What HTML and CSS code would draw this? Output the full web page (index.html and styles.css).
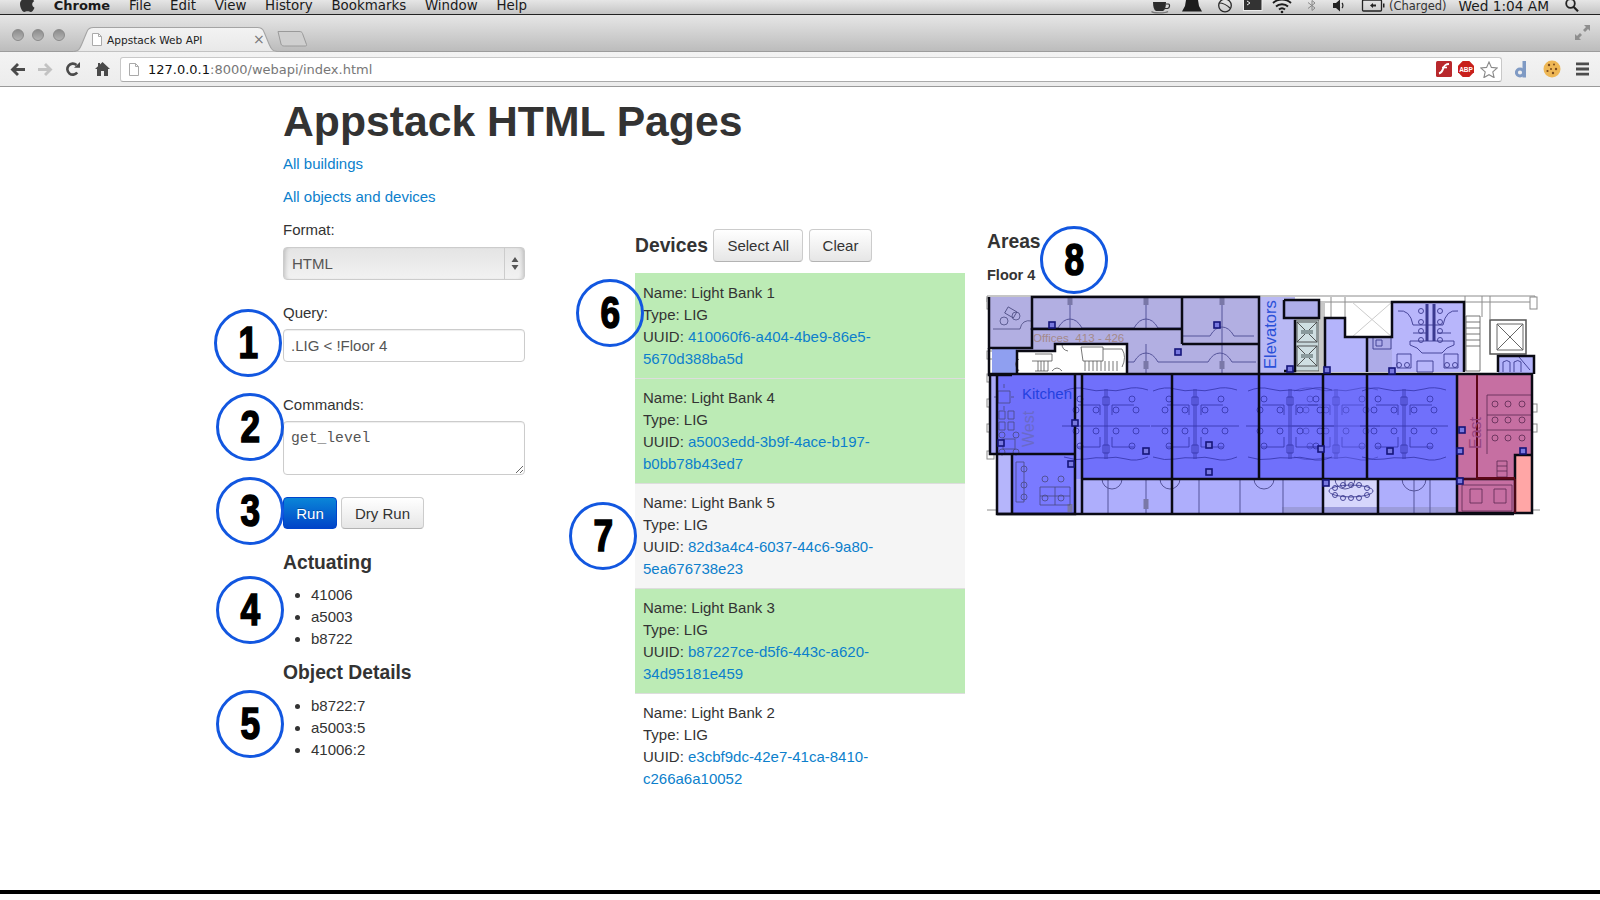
FILE: index.html
```html
<!DOCTYPE html>
<html>
<head>
    <meta charset="utf-8">
    <title>Appstack Web API</title>
    <link rel="stylesheet" href="styles.css">
</head>
<body>
<div class="menubar">
    <svg class="apple" viewBox="0 0 15 13"><path d="M10.5 0c-1.500 0-2.100.9-3 .9S5.800 0 4.500 0C2 0 0 2 0 5c0 3.500 2.300 8 4.300 8 1.100 0 1.700-.7 3.200-.7s2 .7 3.200.7c1.500 0 3-2.200 3.800-4.300-1.500-.7-2.300-1.900-2.300-3.400 0-1.300.8-2.400 2-3.100C13.400.7 12 0 10.500 0z"/></svg>
    <span class="menu-item app-name">Chrome</span>
    <span class="menu-item">File</span>
    <span class="menu-item">Edit</span>
    <span class="menu-item">View</span>
    <span class="menu-item">History</span>
    <span class="menu-item">Bookmarks</span>
    <span class="menu-item">Window</span>
    <span class="menu-item">Help</span>
    <div class="tray">
        <svg class="tray-icons" viewBox="1150 0 238 15">
            <path d="M1154 2h13c0 5-1 8-3 9h-7c-2-1-3-4-3-9z" fill="#2c2c2c"/>
            <path d="M1167 4h2.500c1.500 0 1.500 4-1 4.500h-2.500" fill="none" stroke="#2c2c2c" stroke-width="1.200"/>
            <path d="M1152.500 11.500c2 1.800 14 1.800 16.500 0" fill="none" stroke="#777" stroke-width="1.400"/>
            <path d="M1187 0h12l1 6 3 5.500h-20l3-5.500z" fill="#1c1c1c"/>
            <circle cx="1226" cy="5.500" r="6.300" fill="none" stroke="#2a2a2a" stroke-width="1.300"/>
            <path d="M1220 3c3 0 8 2 11.500 5.500" fill="none" stroke="#2a2a2a" stroke-width="1.200"/>
            <rect x="1244.500" y="-2" width="18.500" height="12.500" fill="#333" stroke="#eee" stroke-width="1"/>
            <path d="M1248 1l3 2-3 2" fill="none" stroke="#eee" stroke-width="1"/>
            <path d="M1274 3c5-4.500 13-4.500 18 0M1277 6.500c3-3 9-3 12 0M1280 9.500c1.800-1.600 4.200-1.600 6 0" fill="none" stroke="#1c1c1c" stroke-width="1.900"/>
            <circle cx="1283" cy="12" r="1.300" fill="#1c1c1c"/>
            <path d="M1309 2.500l7 5.500-3 2.500V.500l3 2.500-7 5.500" fill="none" stroke="#888" stroke-width="1"/>
            <path d="M1334 3h3l4-3.500v12l-4-3.500h-3z" fill="#222"/>
            <path d="M1343 3c1.200 1.200 1.200 3.800 0 5" fill="none" stroke="#222" stroke-width="1.200"/>
            <rect x="1363.500" y="0" width="19" height="11" rx="1" fill="none" stroke="#222" stroke-width="1.300"/>
            <rect x="1384" y="3.500" width="1.500" height="4" fill="#222"/>
            <path d="M1368 5.500h3l3-2.500v1.500h3v2h-3V8l-3-2.500z" fill="#222"/>
        </svg>
        <span class="tray-text charged">(Charged)</span>
        <span class="tray-text clock">Wed 1:04 AM</span>
        <svg class="magnifier" viewBox="0 0 14 12"><circle cx="5.500" cy="3.500" r="4.300" fill="none" stroke="#222" stroke-width="1.800"/><path d="M8.500 6.800l4.500 4.500" stroke="#222" stroke-width="2.200"/></svg>
    </div>
</div>

<div class="tabstrip">
    <div class="lights"><i></i><i></i><i></i></div>
    <div class="tab">
        <svg class="tab-shape" viewBox="0 0 192 25" preserveAspectRatio="none">
            <path d="M0 24.500c5 0 6-2 8-7l5-13c1-3 2.500-4 6-4h152c3.500 0 5 1 6 4l5 13c2 5 3 7 10 7" fill="url(#tabfill)" stroke="#a4a4a4"/>
            <defs><linearGradient id="tabfill" x1="0" y1="0" x2="0" y2="1"><stop offset="0" stop-color="#f3f3f3"/><stop offset="1" stop-color="#e8e8e8"/></linearGradient></defs>
        </svg>
        <svg class="doc tab-doc" viewBox="0 0 10 13"><path d="M.5.500h6l3 3v9h-9z" fill="#fff" stroke="#aaa"/><path d="M6.500.500v3h3" fill="none" stroke="#aaa"/></svg>
        <span class="tab-title">Appstack Web API</span>
        <span class="tab-close">×</span>
    </div>
    <svg class="new-tab" viewBox="0 0 30 17"><path d="M.5 1.500h21c2 0 3 .5 3.500 2l4 11c.4 1.200-.3 1.500-1.500 1.500H7c-2 0-3-.5-3.500-2z" fill="#cfcfcf" stroke="#9a9a9a"/></svg>
    <svg class="expand" viewBox="0 0 15 15"><path d="M9 0h6v6l-2-2-3 3-2-2 3-3zM6 15H0V9l2 2 3-3 2 2-3 3z" fill="#8e8e8e"/></svg>
</div>

<div class="toolbar">
    <svg class="nav-icon back" viewBox="0 0 15 13"><path d="M7 0l2 2-3 3h9v3H6l3 3-2 2-6.500-6.500z" fill="#4a4a4a"/></svg>
    <svg class="nav-icon forward" viewBox="0 0 15 13"><path d="M8 0L6 2l3 3H0v3h9l-3 3 2 2 6.500-6.500z" fill="#c2c2c2"/></svg>
    <svg class="nav-icon reload" viewBox="0 0 14 14"><path d="M11.200 10.500A5.500 5.500 0 1 1 10.500 3" fill="none" stroke="#4a4a4a" stroke-width="2.600"/><path d="M8 5.800h6V0z" fill="#4a4a4a"/></svg>
    <svg class="nav-icon home" viewBox="0 0 15 14"><path d="M7.500 0L15 7h-2v7H9V9H6v5H2V7H0l3-2.800V1h2v1.400z" fill="#4a4a4a"/></svg>
    <div class="omnibox">
        <svg class="doc" viewBox="0 0 10 13"><path d="M.5.500h6l3 3v9h-9z" fill="#fff" stroke="#aaa"/><path d="M6.500.500v3h3" fill="none" stroke="#aaa"/></svg>
        <span class="url"><b>127.0.0.1</b>:8000/webapi/index.html</span>
        <svg class="ext flash" viewBox="0 0 16 16"><rect width="16" height="16" rx="1.500" fill="#b8282c"/><path d="M13 3c-4 0-5 2-6 5s-2 4-4 4.500" fill="none" stroke="#fff" stroke-width="2"/><path d="M6 6.500h5" stroke="#fff" stroke-width="1.600"/></svg>
        <svg class="ext abp" viewBox="0 0 16 16"><path d="M4.700 0h6.600L16 4.700v6.600L11.300 16H4.700L0 11.300V4.700z" fill="#c8201c"/><text x="8" y="10.800" class="abp-text">ABP</text></svg>
        <svg class="ext star" viewBox="0 0 18 17"><path d="M9 1l2.400 5.400 5.800.6-4.400 3.900 1.300 5.700L9 13.700l-5.100 2.900 1.300-5.700L.8 7l5.800-.6z" fill="#fff" stroke="#8a8a8a" stroke-width="1.100"/></svg>
    </div>
    <svg class="tool-icon dee" viewBox="0 0 12 17"><circle cx="5" cy="11.500" r="3.600" fill="none" stroke="#7f9ac4" stroke-width="3"/><path d="M7.500 0h3.500v16.500H7.500z" fill="#7f9ac4"/></svg>
    <svg class="tool-icon cookie" viewBox="0 0 18 18"><circle cx="9" cy="9" r="8.500" fill="#eeb755"/><g fill="#7a4a1c"><circle cx="6" cy="5" r="1.200"/><circle cx="11" cy="4.500" r="1"/><circle cx="13" cy="9" r="1.200"/><circle cx="8" cy="9" r="1"/><circle cx="4.500" cy="11" r="1.100"/><circle cx="10" cy="13" r="1.200"/></g></svg>
    <svg class="tool-icon burger" viewBox="0 0 14 14"><path d="M0 0h14v3H0zM0 5.500h14v3H0zM0 11h14v3H0z" fill="#4c4c4c"/></svg>
</div>

<div class="page">
    <div class="heading">
        <h1>Appstack HTML Pages</h1>
        <p><a href="#">All buildings</a></p>
        <p><a href="#">All objects and devices</a></p>
    </div>
    <div class="columns">
        <form class="col-query">
            <label>Format:</label>
            <div class="select-wrap">
                <select><option>HTML</option></select>
                <span class="select-arrows"><svg viewBox="0 0 8 13"><path d="M4 0l3.500 5h-7zM4 13L.5 8h7z" fill="#555"/></svg></span>
            </div>
            <label>Query:</label>
            <input type="text" value=".LIG &lt; !Floor 4">
            <label>Commands:</label>
            <textarea>get_level</textarea>
            <div class="run-row">
                <button type="button" class="btn btn-primary">Run</button>
                <button type="button" class="btn">Dry Run</button>
            </div>
            <h4>Actuating</h4>
            <ul>
                <li>41006</li>
                <li>a5003</li>
                <li>b8722</li>
            </ul>
            <h4>Object Details</h4>
            <ul>
                <li>b8722:7</li>
                <li>a5003:5</li>
                <li>41006:2</li>
            </ul>
        </form>

        <div class="col-devices">
            <div class="devices-head">
                <h4>Devices</h4>
                <button type="button" class="btn">Select All</button>
                <button type="button" class="btn">Clear</button>
            </div>
            <div class="device on">Name: Light Bank 1<br>Type: LIG<br>UUID: <a href="#">410060f6-a404-4be9-86e5-</a><br><a href="#">5670d388ba5d</a></div>
            <div class="device on">Name: Light Bank 4<br>Type: LIG<br>UUID: <a href="#">a5003edd-3b9f-4ace-b197-</a><br><a href="#">b0bb78b43ed7</a></div>
            <div class="device hover">Name: Light Bank 5<br>Type: LIG<br>UUID: <a href="#">82d3a4c4-6037-44c6-9a80-</a><br><a href="#">5ea676738e23</a></div>
            <div class="device on">Name: Light Bank 3<br>Type: LIG<br>UUID: <a href="#">b87227ce-d5f6-443c-a620-</a><br><a href="#">34d95181e459</a></div>
            <div class="device">Name: Light Bank 2<br>Type: LIG<br>UUID: <a href="#">e3cbf9dc-42e7-41ca-8410-</a><br><a href="#">c266a6a10052</a></div>
        </div>

        <div class="col-areas">
            <h4>Areas</h4>
            <h5>Floor 4</h5>
            <svg class="plan" viewBox="985 292 555 228">
                <defs>
                    <g id="bay" fill="none" stroke="#3434a8" stroke-width=".8">
                        <path d="M-42-36q12-5 22-2t20 1q10 2 20-1t22 1M-42 30q12 4 22 2t20-1q10-2 20 1t22-2"/>
                        <path d="M-44-1H44M-1-38V32M1-38V32M-28-22h22v10M28-22H6v10M-28 20h22V10M28 20H6V10"/>
                        <path d="M-3-30h6v8h-6zM-3 18h6v8h-6z"/>
                        <circle cx="-10" cy="-17" r="3"/><circle cx="10" cy="-17" r="3"/><circle cx="-10" cy="4" r="3"/><circle cx="10" cy="4" r="3"/>
                        <circle cx="-30" cy="-17" r="3"/><circle cx="30" cy="-17" r="3"/><circle cx="-30" cy="4" r="3"/><circle cx="30" cy="4" r="3"/>
                        <circle cx="-26" cy="19" r="3"/><circle cx="26" cy="19" r="3"/><circle cx="-26" cy="-28" r="3"/><circle cx="26" cy="-28" r="3"/>
                    </g>
                    <g id="lift" fill="none" stroke="#444" stroke-width=".9">
                        <rect x="-10" y="-10" width="20" height="20" fill="#cfdfe2"/>
                        <path d="M-10-10L10 10M10-10L-10 10"/>
                        <rect x="-6" y="-2" width="12" height="4" fill="#8a9a9c" stroke="none"/>
                    </g>
                    <g id="sq"><rect x="-3" y="-3" width="6" height="6" fill="#7878e0" stroke="#15157a" stroke-width="1.600"/></g>
                </defs>

                <!-- shell and windows -->
                <g fill="#fff" stroke="#8c8c8c" stroke-width="1">
                    <path d="M987 297H1535V303H987z" fill="none"/>
                    <rect x="987" y="299" width="5" height="11"/><rect x="987" y="352" width="6" height="8"/><rect x="987" y="375" width="6" height="8"/>
                    <rect x="987" y="400" width="7" height="8"/><rect x="987" y="425" width="7" height="8"/><rect x="987" y="452" width="7" height="8"/>
                    <rect x="1530" y="298" width="7" height="12"/><rect x="1532" y="405" width="5" height="8"/><rect x="1532" y="425" width="5" height="8"/>
                    <path d="M987 511H1012M1532 511H1540" fill="none"/>
                    <path d="M1331 298V320M1345 298V320M1465 297V372M1482 297V318M1490 297V320" fill="none"/>
                </g>
                <path d="M1466 317h14v55h-14zM1466 323h14M1466 329h14M1466 335h14M1466 341h14M1466 347h14" fill="#fff" stroke="#666" stroke-width=".9"/>

                <!-- north wing -->
                <path d="M990 298H1259V376H1127V345H1055V352H1017V349H990z" fill="#b2afe2"/>
                <rect x="992" y="349" width="25" height="27" fill="#8f9ff0"/>
                <rect x="1259" y="298" width="36" height="78" fill="#b9b9f4"/>
                <rect x="1284" y="301" width="35" height="18" fill="#aeaeea"/>
                <rect x="1295" y="321" width="24" height="51" fill="#c7d7da" stroke="#555"/>
                <use href="#lift" x="1307" y="333"/><use href="#lift" x="1307" y="357"/>
                <rect x="1319" y="303" width="6" height="70" fill="#c8c8c8"/>
                <path d="M1325 319h20v19h47v35h-67z" fill="#b4b4fb"/>
                <rect x="1367" y="338" width="25" height="35" fill="#adabe8"/>
                <rect x="1392" y="303" width="72" height="70" fill="#b8b6fb"/>
                <rect x="1498" y="357" width="36" height="17" fill="#b4b4fb"/>

                <!-- lift on the east side -->
                <rect x="1490" y="321" width="36" height="34" fill="#fff" stroke="#555" stroke-width="1.500"/>
                <path d="M1497 325h26v26h-26zM1497 325l26 26M1523 325l-26 26" fill="none" stroke="#666"/>
                <path d="M1352 303l40 35M1392 303l-40 35" stroke="#ccc"/>

                <!-- open office -->
                <rect x="997" y="376" width="78" height="79" fill="#7070fb"/>
                <rect x="990" y="376" width="7" height="79" fill="#aaaaf8"/>
                <rect x="1075" y="376" width="7" height="104" fill="#9090ff"/>
                <rect x="1082" y="376" width="375" height="104" fill="#7070fb"/>
                <rect x="1457" y="376" width="75" height="104" fill="#c66fa2"/>
                <rect x="1458" y="480" width="57" height="34" fill="#c66fa2"/>
                <rect x="1515" y="456" width="17" height="58" fill="#ffa6a6"/>

                <!-- south wing -->
                <rect x="997" y="455" width="15" height="60" fill="#b5b5fb"/>
                <rect x="1012" y="455" width="63" height="60" fill="#7a7aff"/>
                <rect x="1075" y="480" width="383" height="35" fill="#aeaefc"/>
                <rect x="1323" y="480" width="55" height="34" fill="#d6d6fc"/>
                <rect x="1282" y="508" width="176" height="6" fill="#9c9cdc"/>

                <!-- partitions -->
                <g stroke="#55549a" stroke-width="1" fill="none">
                    <path d="M1070 298V330M1146 298V330M1222 298V345M1146 345V375M1222 345V375M1032 330H1030"/>
                    <path d="M1032 329H1058q5-9 12-9t12 9H1134q5-9 12-9t12 9h24M1182 337H1210q5-9 12-9t12 9h20"/>
                    <path d="M1127 363H1134q5-9 12-9t12 9h50q5-9 12-9t12 9h24"/>
                    <path d="M1108 480V515M1146 480V515M1199 480V515M1240 480V515M1283 480V515M1345 480V488M1414 480V515M1430 480V515"/>
                    <path d="M1335 480a10 10 0 0 0 20 0M1160 480a10 10 0 0 0 20 0M1254 480a10 10 0 0 0 20 0M1402 480a12 12 0 0 0 24 0M1102 480a10 10 0 0 0 20 0"/>
                    <path d="M1070 298v8M1146 298v8M1222 298v8" stroke-width="5" stroke="#7a78a8"/>
                    <path d="M1146 362v8M1222 362v8M1146 500v10M1070 505v8" stroke-width="5" stroke="#7a78a8"/>
                </g>

                <!-- corner office -->
                <g stroke="#4a4a80" stroke-width=".8" fill="none">
                    <circle cx="1004" cy="322" r="4"/><circle cx="1016" cy="317" r="4"/><rect x="1006" y="310" width="10" height="7" transform="rotate(30 1011 313)"/>
                    <path d="M993 330H1020q2-10 12-8"/>
                    <path d="M998 392h12v12h-12zM1004 385v4M1004 407v4M994 398h3M1011 398h3M999 412h6v8h-6zM999 423h6v8h-6zM1008 412h6v8h-6zM1008 423h6v8h-6z"/>
                    <rect x="1003" y="440" width="12" height="10"/><circle cx="1002" cy="436" r="3"/><circle cx="1016" cy="436" r="3"/><circle cx="1002" cy="453" r="3"/><circle cx="1016" cy="453" r="3"/>
                    <path d="M1040 488h30v18h-30zM1055 488v18M1040 497h30"/>
                    <circle cx="1045" cy="480" r="3"/><circle cx="1061" cy="480" r="3"/><circle cx="1045" cy="499" r="3"/><circle cx="1061" cy="499" r="3"/><circle cx="1024" cy="470" r="3"/><circle cx="1024" cy="486" r="3"/><circle cx="1024" cy="498" r="3"/>
                    <path d="M1016 463h8v40h-8z"/>
                </g>

                <!-- stairs -->
                <g stroke="#555" stroke-width=".8" fill="#fff">
                    <path d="M1017 352H1055V345H1127V374H1017z" stroke="none"/>
                    <path d="M1035 355H1052V362H1048V372H1035M1038 362V372M1041 362V372M1044 362V372M1032 362h16" fill="none"/>
                    <path d="M1081 348H1103V362H1083zM1103 350H1122Q1127 358 1122 368M1085 362V372M1089 362V372M1093 362V372M1097 362V372M1101 362V372M1105 362V372M1109 362V372M1113 362V372M1117 362V372" fill="none"/>
                    <path d="M1019 360Q1012 364 1019 372M1062 345q0 6 6 7M1052 372q5-6 10 0" fill="none"/>
                </g>

                <use href="#bay" x="1106" y="428"/>
                <use href="#bay" x="1195" y="428"/>
                <use href="#bay" x="1290" y="428"/>
                <use href="#bay" x="1336" y="428" opacity=".6"/>
                <use href="#bay" x="1404" y="428"/>

                <!-- east office -->
                <g stroke="#5c2a52" stroke-width=".8" fill="none">
                    <path d="M1487 396H1531M1487 416H1531M1487 431H1531M1487 396V455"/>
                    <circle cx="1495" cy="405" r="3"/><circle cx="1508" cy="405" r="3"/><circle cx="1522" cy="405" r="3"/>
                    <circle cx="1495" cy="421" r="3"/><circle cx="1508" cy="421" r="3"/><circle cx="1522" cy="421" r="3"/>
                    <circle cx="1495" cy="439" r="3"/><circle cx="1508" cy="439" r="3"/><circle cx="1522" cy="439" r="3"/>
                    <path d="M1497 462h10v16h-10zM1497 467h10M1497 472h10"/>
                    <path d="M1470 490h12v14h-12zM1494 490h12v14h-12zM1462 486h50v26h-50z"/>
                </g>

                <!-- toilets -->
                <g stroke="#3b3a90" stroke-width=".9" fill="none">
                    <path d="M1427 305V342M1434 305V342" stroke-width="3"/>
                    <path d="M1398 312q12-2 15 14h15M1458 312q-12-2-15 14h-15M1410 342H1454v4q-8 2-12 8h-20q-4-6-12-8zM1413 334h14M1437 334h14"/>
                    <circle cx="1421" cy="312" r="2.500"/><circle cx="1440" cy="312" r="2.500"/><circle cx="1421" cy="323" r="2.500"/><circle cx="1440" cy="323" r="2.500"/><circle cx="1421" cy="332" r="2.500"/><circle cx="1440" cy="332" r="2.500"/><circle cx="1421" cy="341" r="2.500"/><circle cx="1440" cy="341" r="2.500"/>
                    <path d="M1397 355h14v14h-14zM1444 355h14v14h-14zM1417 362h16v11h-16z"/>
                    <circle cx="1399" cy="366" r="2.500"/><circle cx="1407" cy="366" r="2.500"/><circle cx="1447" cy="366" r="2.500"/><circle cx="1455" cy="366" r="2.500"/>
                    <path d="M1373 338h18v12h-18zM1376 341h6v6h-6z"/>
                    <path d="M1503 373v-10q4-3 7 0v10M1514 373v-10q4-3 7 0v10M1519 358l11 13"/>
                    <ellipse cx="1351" cy="492" rx="22" ry="6"/>
                    <circle cx="1335" cy="489" r="2.500"/><circle cx="1343" cy="486" r="2.500"/><circle cx="1351" cy="486" r="2.500"/><circle cx="1359" cy="486" r="2.500"/><circle cx="1367" cy="489" r="2.500"/>
                    <circle cx="1335" cy="496" r="2.500"/><circle cx="1343" cy="499" r="2.500"/><circle cx="1351" cy="499" r="2.500"/><circle cx="1359" cy="499" r="2.500"/><circle cx="1367" cy="496" r="2.500"/>
                </g>

                <!-- heavy room outlines -->
                <g fill="none" stroke="#0a0a14" stroke-width="2.500">
                    <path d="M989 298V349H1032V298H1259V376"/>
                    <path d="M1032 330H1182V298M1182 345V330M1182 345H1258"/>
                    <path d="M1017 376V352H1055V345H1127V376"/>
                    <path d="M989 349V376H1012"/>
                    <path d="M1284 301V319H1319V301H1284"/>
                    <path d="M1295 321V372H1284"/>
                    <path d="M1325 373V319H1345V338H1392V303H1464V373"/>
                    <path d="M1367 338V373"/>
                    <path d="M1498 373V357H1534V375"/>
                    <path d="M990 376V455H1075V376M997 376V515H1075V376"/>
                    <path d="M990 375H1532V456M1012 455V515"/>
                    <path d="M1082 376V515M1172 376V515M1259 376V480M1323 376V514M1367 376V480M1457 376V514"/>
                    <path d="M1082 480H1514M997 515H1514M1378 480V514"/>
                    <path d="M1532 456H1515V514H1532V456M1458 514H1515"/>
                </g>
                <path d="M1477 376V479H1515" fill="none" stroke="#5c0818" stroke-width="2"/>
                <path d="M1515 480V514M1458 480H1515" fill="none" stroke="#5c0818" stroke-width="1.600"/>

                <use href="#sq" x="1052" y="326"/><use href="#sq" x="1178" y="353"/><use href="#sq" x="1217" y="326"/>
                <use href="#sq" x="1146" y="452"/><use href="#sq" x="1209" y="446"/><use href="#sq" x="1209" y="473"/><use href="#sq" x="1075" y="424"/>
                <use href="#sq" x="1001" y="444"/><use href="#sq" x="1071" y="465"/><use href="#sq" x="1321" y="450"/><use href="#sq" x="1390" y="452"/>
                <use href="#sq" x="1462" y="431"/><use href="#sq" x="1460" y="452"/><use href="#sq" x="1523" y="452"/><use href="#sq" x="1327" y="371"/>
                <use href="#sq" x="1392" y="372"/><use href="#sq" x="1290" y="370"/><use href="#sq" x="1326" y="484"/><use href="#sq" x="1460" y="482"/>

                <text x="1033" y="343" class="plan-offices">Offices  413 - 426</text>
                <text x="1022" y="400" class="plan-kitchen">Kitchen</text>
                <text transform="translate(1034 448) rotate(-90)" class="plan-west">West</text>
                <text transform="translate(1481 450) rotate(-90)" class="plan-east">East</text>
                <text transform="translate(1276 370) rotate(-90)" class="plan-elevators">Elevators</text>
            </svg>
        </div>
    </div>
</div>

<div class="mark mark-1"><span>1</span></div>
<div class="mark mark-2"><span>2</span></div>
<div class="mark mark-3"><span>3</span></div>
<div class="mark mark-4"><span>4</span></div>
<div class="mark mark-5"><span>5</span></div>
<div class="mark mark-6"><span>6</span></div>
<div class="mark mark-7"><span>7</span></div>
<div class="mark mark-8"><span>8</span></div>

<div class="dock-edge"></div>
</body>
</html>
```

FILE: styles.css
```css
*{
    box-sizing: border-box;
}
body{
    margin:0;
    height:100vh;
    overflow:hidden;
    display:flex;
    flex-direction:column;
    background:#fff;
    color:#333;
    font-family:"Liberation Sans",Arial,sans-serif;
    font-size:15px;
    line-height:22px;
    position:relative;
}

/* mac menu bar */
.menubar{
    height:15px;
    flex:none;
    display:flex;
    align-items:flex-start;
    overflow:hidden;
    background:linear-gradient(#e6e6e6,#c4c4c4);
    border-bottom:1px solid #222;
    font-family:"DejaVu Sans",sans-serif;
    font-size:13.4px;
    line-height:12px;
    color:#1a1a1a;
}
.apple{
    width:15px;
    height:13px;
    margin:-1px 0 0 20px;
    fill:#333;
    flex:none;
}
.menu-item{
    margin-left:18.700px;
}
.app-name{
    font-size:13px;
    font-weight:bold;
}
.tray{
    margin-left:auto;
    display:flex;
    align-items:flex-start;
}
.tray-icons{
    width:238px;
    height:15px;
    flex:none;
}
.tray-text{
    font-size:13.700px;
}
.charged{
    margin-left:2px;
    font-size:11.500px;
    color:#333;
}
.clock{
    margin-left:12px;
}
.magnifier{
    width:14px;
    height:12px;
    margin:0 21px 0 16px;
}

/* tabs */
.tabstrip{
    height:37px;
    flex:none;
    display:flex;
    align-items:flex-end;
    background:linear-gradient(#e6e6e6,#bcbcbc);
    border-bottom:1px solid #9c9c9c;
}
.lights{
    display:flex;
    gap:8.500px;
    margin:0 0 10px 11.500px;
}
.lights i{
    width:12px;
    height:12px;
    border-radius:50%;
    background:linear-gradient(#8c8c8c,#b4b4b4);
    border:1px solid #8a8a8a;
}
.tab{
    width:207px;
    height:25px;
    margin-left:8.500px;
    margin-bottom:-1px;
    position:relative;
    display:flex;
    align-items:center;
    font-family:"DejaVu Sans",sans-serif;
    font-size:10.600px;
    color:#222;
}
.tab-shape{
    position:absolute;
    left:0;
    top:0;
    width:100%;
    height:100%;
}
.doc{
    width:10px;
    height:13px;
    flex:none;
}
.tab-doc{
    position:relative;
    margin-left:19px;
}
.tab-title{
    position:relative;
    margin-left:5px;
}
.tab-close{
    position:absolute;
    left:180px;
    top:1px;
    font-size:14px;
    color:#777;
}
.new-tab{
    width:31px;
    height:17px;
    margin:0 0 4px -3px;
}
.expand{
    width:15px;
    height:15px;
    margin:0 10px 11px auto;
}

/* toolbar */
.toolbar{
    height:35px;
    flex:none;
    display:flex;
    align-items:center;
    background:linear-gradient(#f3f3f3,#ececec);
    border-bottom:1px solid #9a9a9a;
}
.nav-icon{
    flex:none;
}
.back{
    width:15px;
    height:13px;
    margin-left:10px;
}
.forward{
    width:15px;
    height:13px;
    margin-left:13px;
}
.reload{
    width:14px;
    height:14px;
    margin-left:13px;
}
.home{
    width:15px;
    height:14px;
    margin-left:15px;
}
.omnibox{
    width:1382px;
    height:25px;
    margin-left:10px;
    display:flex;
    align-items:center;
    padding-left:8px;
    background:#fff;
    border:1px solid #c8c8c8;
    border-bottom-color:#aaa;
    border-radius:3px;
}
.url{
    margin:1px 0 0 9px;
    font-family:"DejaVu Sans",sans-serif;
    font-size:13px;
    color:#777;
}
.url b{
    font-weight:normal;
    color:#111;
}
.ext{
    width:16px;
    height:16px;
    margin-left:6px;
    flex:none;
}
.flash{
    margin-left:auto;
}
.star{
    width:18px;
    height:17px;
    margin-right:3px;
}
.abp-text{
    font-family:"Liberation Sans",sans-serif;
    font-size:6.500px;
    font-weight:bold;
    fill:#fff;
    text-anchor:middle;
}
.tool-icon{
    flex:none;
}
.dee{
    width:12px;
    height:17px;
    margin-left:13px;
}
.cookie{
    width:18px;
    height:18px;
    margin-left:16px;
}
.burger{
    width:13px;
    height:14px;
    margin-left:15px;
}

/* page */
.page{
    flex:1;
    padding:9px 0 0 283px;
}
h1{
    margin:0;
    font-size:42.700px;
    line-height:50px;
    font-weight:bold;
}
.heading p{
    margin:0 0 11px;
}
.heading h1{
    margin-bottom:7px;
}
a{
    color:#0c7fcc;
    text-decoration:none;
}
.columns{
    display:flex;
}
.col-query{
    width:352px;
    flex:none;
}
.col-query label{
    display:block;
    margin-bottom:5px;
}
.col-query label:first-child{
    margin-bottom:6px;
}
.col-devices{
    width:352px;
    flex:none;
    padding:10px 22px 0 0;
}
.col-areas{
    width:560px;
    padding-top:12px;
}
input,textarea,select{
    display:block;
    width:242px;
    border:1px solid #ccc;
    border-radius:4px;
    background:#fff;
    color:#555;
    font-family:"Liberation Sans",sans-serif;
    font-size:15px;
    box-shadow:inset 0 1px 1px rgba(0,0,0,.07);
    outline:none;
}
input{
    height:33px;
    padding:0 7px;
    margin-bottom:31.500px;
}
textarea{
    height:54px;
    padding:7px 7px;
    margin:1px 0 22.500px;
    font-family:"Liberation Mono",monospace;
    font-size:14.700px;
    line-height:18px;
}
.select-wrap{
    position:relative;
    width:242px;
    margin-bottom:22px;
}
select{
    height:33px;
    padding:0 8px;
    appearance:none;
    background:linear-gradient(#e4e4e4,#f2f2f2);
    box-shadow:inset 4px 0 4px -3px rgba(0,0,0,.2),inset -4px 0 4px -3px rgba(0,0,0,.2);
}
.select-arrows{
    position:absolute;
    right:0;
    top:0;
    width:21px;
    height:33px;
    display:flex;
    align-items:center;
    justify-content:center;
    border-left:1px solid #ccc;
}
.select-arrows svg{
    width:8px;
    height:13px;
}
.run-row{
    display:flex;
    gap:4px;
    margin-bottom:23px;
}
.btn{
    height:32px;
    padding:0 13px;
    border:1px solid #ccc;
    border-bottom-color:#b3b3b3;
    border-radius:4px;
    background:linear-gradient(#fff,#e6e6e6);
    color:#333;
    font-family:"Liberation Sans",sans-serif;
    font-size:15px;
}
.btn-primary{
    width:54px;
    padding:0;
    border-color:#0044cc;
    background:linear-gradient(#0a86d8,#0044c8);
    color:#fff;
    text-shadow:0 -1px 0 rgba(0,0,0,.25);
}
h4{
    margin:0;
    font-size:19.300px;
    line-height:22px;
    font-weight:bold;
}
ul{
    margin:10px 0 12px;
    padding:0 0 0 28px;
}
ul:last-child{
    margin:11px 0 0;
}
.devices-head{
    display:flex;
    align-items:center;
    gap:5.500px;
    height:33px;
    margin-bottom:11px;
}
.devices-head .btn{
    height:33px;
}
.device{
    height:105px;
    padding:8px 8px 0;
    border-top:1px solid #ddd;
}
.device.on{
    background:#bcebb5;
}
.device.hover{
    background:#f5f5f5;
}
.device:nth-child(2){
    padding-top:9px;
    border-top:none;
}
.col-areas h5{
    margin:11px 0 5px;
    font-size:14.500px;
    line-height:22px;
}
.plan{
    display:block;
    width:555px;
    height:228px;
    margin-left:-2px;
}
.plan-offices{
    font-size:11.600px;
    fill:#a58a8a;
    white-space:pre;
}
.plan-kitchen{
    font-size:15px;
    fill:#2440e0;
}
.plan-west{
    font-size:16px;
    fill:#6a6ac8;
}
.plan-east{
    font-size:16px;
    fill:#96447e;
}
.plan-elevators{
    font-size:16.500px;
    fill:#2a50d8;
}

/* numbered callouts */
.mark{
    position:absolute;
    width:68px;
    height:68px;
    border:3px solid #1257e0;
    border-radius:50%;
    display:flex;
    align-items:center;
    justify-content:center;
}
.mark span{
    font-family:"Liberation Sans",sans-serif;
    font-size:44px;
    line-height:44px;
    font-weight:bold;
    color:#000;
    -webkit-text-stroke:1.600px #000;
    transform:scaleX(.8);
}
.mark-1{left:214px;top:309px;}
.mark-2{left:216px;top:393px;}
.mark-3{left:216px;top:477px;}
.mark-4{left:216px;top:576px;}
.mark-5{left:216px;top:690px;}
.mark-6{left:576px;top:279px;}
.mark-7{left:569px;top:502px;}
.mark-8{left:1040px;top:226px;}

.dock-edge{
    height:4px;
    margin-bottom:6px;
    flex:none;
    background:#000;
}
```
